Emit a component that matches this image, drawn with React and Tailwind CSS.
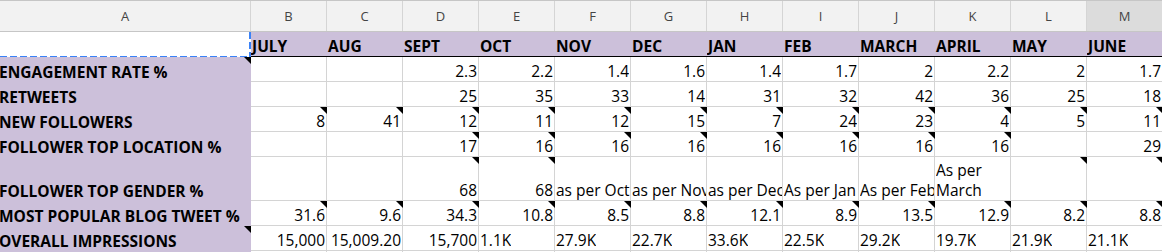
const MONTHS = ['JULY', 'AUG', 'SEPT', 'OCT', 'NOV', 'DEC', 'JAN', 'FEB', 'MARCH', 'APRIL', 'MAY', 'JUNE'];
const LETTERS = ['B', 'C', 'D', 'E', 'F', 'G', 'H', 'I', 'J', 'K', 'L', 'M'];
const ALL = [0, 1, 2, 3, 4, 5, 6, 7, 8, 9, 10, 11];

// values are columns B..M; notes / left hold column indexes
const ROWS = [
  { label: 'ENGAGEMENT RATE %', note: true, values: ['', '', '2.3', '2.2', '1.4', '1.6', '1.4', '1.7', '2', '2.2', '2', '1.7'] },
  { label: 'RETWEETS', values: ['', '', '25', '35', '33', '14', '31', '32', '42', '36', '25', '18'] },
  { label: 'NEW FOLLOWERS', notes: ALL, values: ['8', '41', '12', '11', '12', '15', '7', '24', '23', '4', '5', '11'] },
  { label: 'FOLLOWER TOP LOCATION %', notes: [2, 3, 4, 5, 6, 7, 8, 9], values: ['', '', '17', '16', '16', '16', '16', '16', '16', '16', '', '29'] },
  {
    label: 'FOLLOWER TOP GENDER %',
    tall: true,
    notes: [2, 3, 10, 11],
    left: [4, 5, 6, 7, 8, 9],
    wrap: [9],
    values: ['', '', '68', '68', 'as per Oct', 'as per Nov', 'as per Dec', 'As per Jan', 'As per Feb', 'As per March', '', ''],
  },
  { label: 'MOST POPULAR BLOG TWEET %', notes: ALL, values: ['31.6', '9.6', '34.3', '10.8', '8.5', '8.8', '12.1', '8.9', '13.5', '12.9', '8.2', '8.8'] },
  {
    label: 'OVERALL IMPRESSIONS',
    note: true,
    left: [3, 4, 5, 6, 7, 8, 9, 10, 11],
    values: ['15,000', '15,009.20', '15,700', '1.1K', '27.9K', '22.7K', '33.6K', '22.5K', '29.2K', '19.7K', '21.9K', '21.1K'],
  },
  { label: '', values: ['', '', '', '', '', '', '', '', '', '', '', ''] },
];

const Note = () => (
  <span className="absolute top-0 right-[-1px] z-10 h-0 w-0 border-t-[7px] border-l-[7px] border-t-black border-l-transparent" />
);

export default function App() {
  return (
    <div className="h-[252px] w-[1162px] overflow-hidden bg-white font-['Open_Sans',sans-serif] text-[15.5px] leading-[20px] text-black">
      {/* column letters */}
      <div className="grid h-[32px] grid-cols-[251px_repeat(12,76px)] border-t border-b border-[#c6c6c6] bg-[#f2f2f2] text-[13px] text-[#444]">
        <div className="flex items-center justify-center border-r border-[#d5d5d5]">A</div>
        {LETTERS.map((l) => (
          <div key={l} className={`flex items-center justify-center border-r border-[#d5d5d5] ${l === 'M' ? 'bg-[#dcdcdc]' : ''}`}>
            {l}
          </div>
        ))}
      </div>

      {/* month row */}
      <div className="grid h-[25px] grid-cols-[251px_repeat(12,76px)]">
        <div className="relative bg-white">
          <span className="absolute bottom-[-1px] left-0 h-[2px] w-[251px] bg-[repeating-linear-gradient(90deg,#3b82f6_0_7px,transparent_7px_10px)]" />
          <span className="absolute top-0 right-0 h-[25px] w-[2px] bg-[repeating-linear-gradient(180deg,#3b82f6_0_7px,transparent_7px_10px)]" />
        </div>
        {MONTHS.map((m) => (
          <div key={m} className="flex items-end overflow-hidden whitespace-nowrap border-b border-black bg-[#ccc0da] pl-[1px] font-bold">
            {m}
          </div>
        ))}
      </div>

      {ROWS.map((row, r) => (
        <div key={r} className={`grid grid-cols-[251px_repeat(12,76px)] ${row.tall ? 'h-[44px]' : 'h-[25px]'}`}>
          <div className="relative flex items-end whitespace-nowrap bg-[#ccc0da] font-bold">
            <span className="ml-[-1px]">{row.label}</span>
            {row.note && <span className="absolute top-0 right-0 h-0 w-0 border-t-[7px] border-l-[7px] border-t-black border-l-transparent" />}
          </div>
          {row.values.map((v, i) => {
            const left = row.left?.includes(i);
            const wrap = row.wrap?.includes(i);
            return (
              <div
                key={i}
                className={`relative flex items-end border-r border-b border-[#d4d4d4] ${left ? 'justify-start pl-[1px]' : 'justify-end pr-[1px]'}`}
              >
                <span className={`block overflow-hidden ${wrap ? 'whitespace-normal' : 'whitespace-nowrap'}`}>{v}</span>
                {row.notes?.includes(i) && <Note />}
              </div>
            );
          })}
        </div>
      ))}
    </div>
  );
}
